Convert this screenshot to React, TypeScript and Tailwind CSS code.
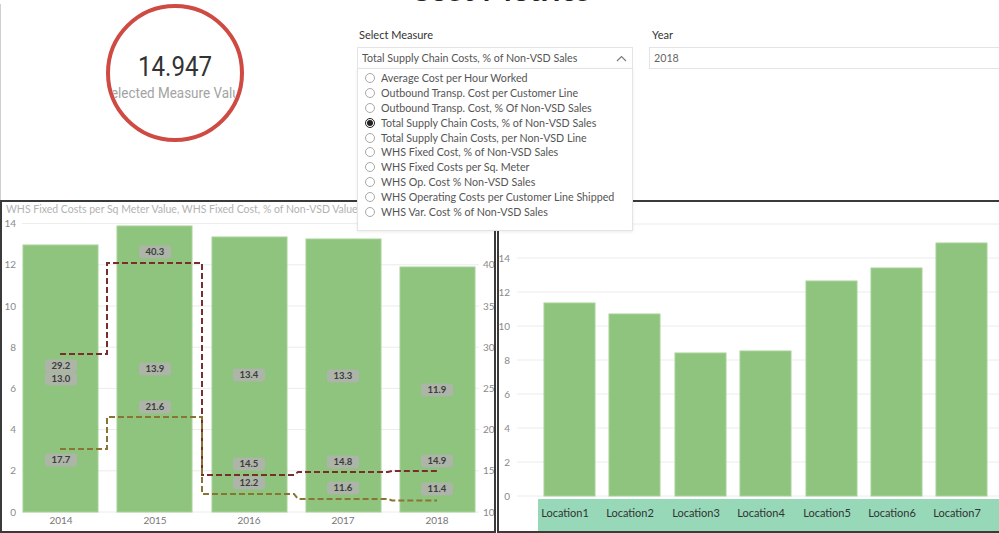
import React from 'react';

const measures = [
  'Average Cost per Hour Worked',
  'Outbound Transp. Cost per Customer Line',
  'Outbound Transp. Cost, % Of Non-VSD Sales',
  'Total Supply Chain Costs, % of Non-VSD Sales',
  'Total Supply Chain Costs, per Non-VSD Line',
  'WHS Fixed Cost, % of Non-VSD Sales',
  'WHS Fixed Costs per Sq. Meter',
  'WHS Op. Cost % Non-VSD Sales',
  'WHS Operating Costs per Customer Line Shipped',
  'WHS Var. Cost % of Non-VSD Sales',
];

const selected = 3;

// left combo chart, page coordinates
const years = [
  { year: '2014', cx: 61, x: 23, top: 245, labels: [['29.2', 366], ['13.0', 379], ['17.7', 460]] },
  { year: '2015', cx: 155, x: 117, top: 226, labels: [['40.3', 252], ['13.9', 369], ['21.6', 407]] },
  { year: '2016', cx: 249, x: 212, top: 237, labels: [['13.4', 375], ['14.5', 464], ['12.2', 483]] },
  { year: '2017', cx: 343, x: 306, top: 239, labels: [['13.3', 376], ['14.8', 462], ['11.6', 488]] },
  { year: '2018', cx: 437, x: 400, top: 267, labels: [['11.9', 390], ['14.9', 461], ['11.4', 489]] },
];

const leftTicks = [14, 12, 10, 8, 6, 4, 2, 0];
const rightTicks = [40, 35, 30, 25, 20, 15, 10];

const maroon = '60,354 107,354 107,263 202,263 202,475 294,475 298,472 388,472 392,471 437,471';
const olive = '60,449 107,449 107,417 202,417 202,494 294,494 298,499 388,499 392,500.5 437,500.5';

const locations = [
  { name: 'Location1', x: 544, top: 303 },
  { name: 'Location2', x: 609, top: 314 },
  { name: 'Location3', x: 675, top: 353 },
  { name: 'Location4', x: 740, top: 351 },
  { name: 'Location5', x: 806, top: 281 },
  { name: 'Location6', x: 871, top: 268 },
  { name: 'Location7', x: 936, top: 243 },
];

const rightChartTicks = [14, 12, 10, 8, 6, 4, 2, 0];

function Radio({ on }: { on: boolean }) {
  if (on) {
    return (
      <span className="w-[10px] h-[10px] rounded-full border border-[#222] flex items-center justify-center shrink-0">
        <span className="w-[6px] h-[6px] rounded-full bg-[#222]" />
      </span>
    );
  }
  return <span className="w-[10px] h-[10px] rounded-full border border-[#a8a8a8] shrink-0" />;
}

function Chevron({ up }: { up?: boolean }) {
  return (
    <svg width="11" height="7" viewBox="0 0 11 7" className="shrink-0">
      <path d={up ? 'M1 6 L5.5 1.5 L10 6' : 'M1 1 L5.5 5.5 L10 1'} fill="none" stroke="#777" strokeWidth="1.1" />
    </svg>
  );
}

function LeftChart() {
  return (
    <svg width="492" height="329" viewBox="2 202 492 329" style={{ fontFamily: 'Lato, "Open Sans", sans-serif' }}>
      <text x="6" y="213" fontSize="10.5" fill="#b3b3b3">
        WHS Fixed Costs per Sq Meter Value, WHS Fixed Cost, % of Non-VSD Value, WHS V
      </text>
      {leftTicks.map((t) => {
        const y = 512 - t * 20.6;
        return (
          <g key={t}>
            <line x1="22" x2="479" y1={y} y2={y} stroke="#ececec" strokeWidth="1" />
            <text x="16" y={y + 3.5} fontSize="10" fill="#8a8a8a" textAnchor="end">{t}</text>
          </g>
        );
      })}
      {rightTicks.map((t) => {
        const y = 512 - (t - 10) * 8.24;
        return (
          <text key={t} x="483" y={y + 3.5} fontSize="10" fill="#8a8a8a">{t}</text>
        );
      })}
      {years.map((b) => (
        <g key={b.year}>
          <rect x={b.x} y={b.top} width="75" height={512 - b.top} fill="#8fc47e" stroke="#a6d196" strokeWidth="1" />
          <text x={b.cx} y="524" fontSize="10" fill="#777" textAnchor="middle">{b.year}</text>
        </g>
      ))}
      <polyline points={maroon} fill="none" stroke="#7a2d2d" strokeWidth="2" strokeDasharray="6 3" />
      <polyline points={olive} fill="none" stroke="#8a7433" strokeWidth="2" strokeDasharray="6 3" />
      {years.map((b) =>
        b.labels.map(([v, y]) => (
          <g key={b.year + v}>
            <rect x={b.cx - 16} y={(y as number) - 6.5} width="32" height="13" rx="3" fill="#adb4a8" />
            <text x={b.cx} y={(y as number) + 3.4} fontSize="9.5" fontWeight="700" fill="#3c3c3c" textAnchor="middle">
              {v}
            </text>
          </g>
        ))
      )}
    </svg>
  );
}

function RightChart() {
  return (
    <svg width="506" height="329" viewBox="499 202 506 329" style={{ fontFamily: 'Lato, "Open Sans", sans-serif' }}>
      <line x1="517" x2="1005" y1="224" y2="224" stroke="#ececec" />
      {rightChartTicks.map((t) => {
        const y = 496 - t * 17;
        return (
          <g key={t}>
            <line x1="517" x2="1005" y1={y} y2={y} stroke="#ececec" strokeWidth="1" />
            <text x="510" y={y + 3.5} fontSize="10" fill="#8a8a8a" textAnchor="end">{t}</text>
          </g>
        );
      })}
      {locations.map((l) => (
        <rect key={l.name} x={l.x} y={l.top} width="51" height={496 - l.top} fill="#8fc47e" stroke="#a6d196" strokeWidth="1" />
      ))}
      <rect x="538" y="499" width="470" height="40" fill="#97d8b9" />
      {locations.map((l) => (
        <text key={l.name + 't'} x={l.x + 21} y="517" fontSize="11" fill="#333" textAnchor="middle">
          {l.name}
        </text>
      ))}
    </svg>
  );
}

export default function App() {
  return (
    <div className="w-[999px] h-[533px] overflow-hidden bg-white relative" style={{ fontFamily: 'Lato, "Open Sans", sans-serif' }}>
      {/* Title, mostly scrolled off the top */}
      <div className="h-[4px] overflow-hidden flex justify-center">
        <div className="text-[32px] font-bold text-[#222] leading-[32px] mt-[-27px] whitespace-nowrap">Cost Metrics</div>
      </div>

      {/* Top section */}
      <div className="h-[196px] flex border-l border-[#d0d0d0]">
        {/* KPI card */}
        <div className="w-[356px] shrink-0 pl-[105px]">
          <div className="w-[138px] h-[138px] rounded-full border-[4px] border-[#cf4a43] overflow-hidden flex flex-col items-center pt-[43px]">
            <div className="text-[28px] leading-[32px] text-[#333] whitespace-nowrap scale-x-[0.86]" style={{ fontFamily: 'Roboto, sans-serif' }}>
              14.947
            </div>
            <div className="text-[14px] leading-[18px] text-[#a3a3a3] whitespace-nowrap mt-[1px] scale-x-[0.96]" style={{ fontFamily: 'Roboto, sans-serif' }}>
              Selected Measure Value
            </div>
          </div>
        </div>

        {/* Measure slicer */}
        <div className="w-[276px] shrink-0 pt-[24px] relative">
          <div className="text-[11px] leading-[14px] text-[#333] pl-[2px]">Select Measure</div>
          <div className="mt-[5px] h-[22px] border border-[#e4e4e4] flex items-center justify-between pl-[4px] pr-[5px]">
            <span className="text-[10.7px] text-[#555] whitespace-nowrap">Total Supply Chain Costs, % of Non-VSD Sales</span>
            <Chevron up />
          </div>
          <div className="absolute left-0 top-[64px] w-[276px] h-[163px] bg-white border border-[#e4e4e4] shadow-[0_1px_3px_rgba(0,0,0,0.08)] z-10 pt-[2px] pl-[7px]">
            {measures.map((m, i) => (
              <div key={m} className="h-[14.8px] flex items-center gap-[6px]">
                <Radio on={i === selected} />
                <span className="text-[10.7px] text-[#555] whitespace-nowrap">{m}</span>
              </div>
            ))}
          </div>
        </div>

        {/* Year slicer */}
        <div className="w-[368px] shrink-0 ml-[16px] pt-[24px]">
          <div className="text-[11px] leading-[14px] text-[#333] pl-[3px]">Year</div>
          <div className="mt-[5px] h-[22px] border border-[#e4e4e4] flex items-center justify-between pl-[4px] pr-[6px]">
            <span className="text-[10.7px] text-[#666]">2018</span>
            <Chevron />
          </div>
        </div>
      </div>

      {/* Charts */}
      <div className="flex h-[333px]">
        <div className="w-[496px] shrink-0 border-2 border-[#3a3a3a] overflow-hidden">
          <LeftChart />
        </div>
        <div className="w-[510px] shrink-0 ml-[1px] border-2 border-[#3a3a3a] overflow-hidden">
          <RightChart />
        </div>
      </div>
    </div>
  );
}
